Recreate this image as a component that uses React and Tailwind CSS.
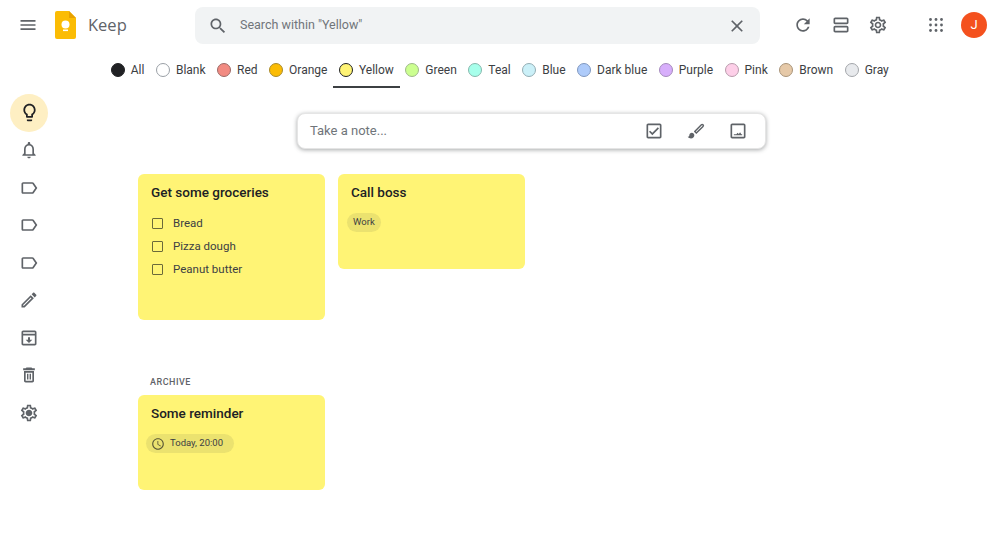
import React from "react";

const P = {
  menu: "M3 18h18v-2H3v2zm0-5h18v-2H3v2zm0-7v2h18V6H3z",
  search: "M15.5 14h-.79l-.28-.27C15.41 12.59 16 11.11 16 9.5 16 5.91 13.09 3 9.5 3S3 5.91 3 9.5 5.91 16 9.5 16c1.61 0 3.09-.59 4.23-1.57l.27.28v.79l5 4.99L20.49 19l-4.99-5zm-6 0C7.01 14 5 11.99 5 9.5S7.01 5 9.5 5 14 7.01 14 9.5 11.99 14 9.5 14z",
  close: "M19 6.41L17.59 5 12 10.59 6.41 5 5 6.41 10.59 12 5 17.59 6.41 19 12 13.41 17.59 19 19 17.59 13.41 12z",
  refresh: "M17.65 6.35C16.2 4.9 14.21 4 12 4c-4.42 0-7.99 3.58-7.99 8s3.57 8 7.99 8c3.73 0 6.84-2.55 7.73-6h-2.08c-.82 2.33-3.04 4-5.65 4-3.31 0-6-2.69-6-6s2.69-6 6-6c1.66 0 3.14.69 4.22 1.78L13 11h7V4l-2.35 2.35z",
  agenda: "M19 3H5c-1.1 0-2 .9-2 2v4c0 1.1.9 2 2 2h14c1.1 0 2-.9 2-2V5c0-1.1-.9-2-2-2zm0 6H5V5h14v4zM19 13H5c-1.1 0-2 .9-2 2v4c0 1.1.9 2 2 2h14c1.1 0 2-.9 2-2v-4c0-1.1-.9-2-2-2zm0 6H5v-4h14v4z",
  settings: "M19.43 12.98c.04-.32.07-.64.07-.98 0-.34-.03-.66-.07-.98l2.11-1.65c.19-.15.24-.42.12-.64l-2-3.46c-.09-.16-.26-.25-.44-.25-.06 0-.12.01-.17.03l-2.49 1c-.52-.4-1.08-.73-1.69-.98l-.38-2.65C14.46 2.18 14.25 2 14 2h-4c-.25 0-.46.18-.49.42l-.38 2.65c-.61.25-1.17.59-1.69.98l-2.49-1c-.06-.02-.12-.03-.18-.03-.17 0-.34.09-.43.25l-2 3.46c-.13.22-.07.49.12.64l2.11 1.65c-.04.32-.07.65-.07.98 0 .33.03.66.07.98l-2.11 1.65c-.19.15-.24.42-.12.64l2 3.46c.09.16.26.25.44.25.06 0 .12-.01.17-.03l2.49-1c.52.4 1.08.73 1.69.98l.38 2.65c.03.24.24.42.49.42h4c.25 0 .46-.18.49-.42l.38-2.65c.61-.25 1.17-.59 1.69-.98l2.49 1c.06.02.12.03.18.03.17 0 .34-.09.43-.25l2-3.46c.12-.22.07-.49-.12-.64l-2.11-1.65zm-1.98-1.71c.04.31.05.52.05.73 0 .21-.02.43-.05.73l-.14 1.13.89.7 1.08.84-.7 1.21-1.27-.51-1.04-.42-.9.68c-.43.32-.84.56-1.25.73l-1.06.43-.16 1.13-.2 1.35h-1.4l-.19-1.35-.16-1.13-1.06-.43c-.43-.18-.83-.41-1.23-.71l-.91-.7-1.06.43-1.27.51-.7-1.21 1.08-.84.89-.7-.14-1.13c-.03-.31-.05-.54-.05-.74s.02-.43.05-.73l.14-1.13-.89-.7-1.08-.84.7-1.21 1.27.51 1.04.42.9-.68c.43-.32.84-.56 1.25-.73l1.06-.43.16-1.13.2-1.35h1.39l.19 1.35.16 1.13 1.06.43c.43.18.83.41 1.23.71l.91.7 1.06-.43 1.27-.51.7 1.21-1.07.85-.89.7.14 1.13zM12 8c-2.21 0-4 1.79-4 4s1.79 4 4 4 4-1.79 4-4-1.79-4-4-4z",
  ring: "M12 14c-1.1 0-2-.9-2-2s.9-2 2-2 2 .9 2 2-.9 2-2 2z",
  bulb: "M9 21c0 .55.45 1 1 1h4c.55 0 1-.45 1-1v-1H9v1zm3-19C8.14 2 5 5.14 5 9c0 2.38 1.19 4.47 3 5.74V17c0 .55.45 1 1 1h6c.55 0 1-.45 1-1v-2.26c1.81-1.27 3-3.36 3-5.74 0-3.86-3.14-7-7-7zm2.85 11.1l-.85.6V16h-4v-2.3l-.85-.6C7.8 12.16 7 10.63 7 9c0-2.76 2.24-5 5-5s5 2.24 5 5c0 1.63-.8 3.16-2.15 4.1z",
  bell: "M12 22c1.1 0 2-.9 2-2h-4c0 1.1.9 2 2 2zm6-6v-5c0-3.07-1.63-5.64-4.5-6.32V4c0-.83-.67-1.5-1.5-1.5s-1.5.67-1.5 1.5v.68C7.64 5.36 6 7.92 6 11v5l-2 2v1h16v-1l-2-2zm-2 1H8v-6c0-2.48 1.51-4.5 4-4.5s4 2.02 4 4.5v6z",
  label: "M17.63 5.84C17.27 5.33 16.67 5 16 5L5 5.01C3.9 5.01 3 5.9 3 7v10c0 1.1.9 1.99 2 1.99L16 19c.67 0 1.27-.33 1.63-.84L22 12l-4.37-6.16zM16 17H5V7h11l3.55 5L16 17z",
  edit: "M3 17.25V21h3.75L17.81 9.94l-3.75-3.75L3 17.25zM5.92 19H5v-.92l9.06-9.06.92.92L5.92 19zM20.71 5.63l-2.34-2.34c-.2-.2-.45-.29-.71-.29s-.51.1-.7.29l-1.83 1.83 3.75 3.75 1.83-1.83c.39-.39.39-1.02 0-1.41z",
  archive: "M19 3H5c-1.1 0-2 .9-2 2v14c0 1.1.9 2 2 2h14c1.1 0 2-.9 2-2V5c0-1.1-.9-2-2-2zM5 5h14v2H5V5zm0 14V9h14v10H5zm8.2-8h-2.4v3H8l4 4 4-4h-2.8v-3z",
  trash: "M15 3H9L8 4H5v2.2h14V4h-3l-1-1zM6 7.2V19c0 1.1.9 2 2 2h8c1.1 0 2-.9 2-2V7.2H6zM16 19H8V9.2h8V19zM9.6 10.5h1.7v7H9.6zm3.1 0h1.7v7h-1.7z",
  check: "M19 3H5c-1.11 0-2 .9-2 2v14c0 1.1.89 2 2 2h14c1.11 0 2-.9 2-2V5c0-1.1-.89-2-2-2zm0 16H5V5h14v14zM17.99 9l-1.41-1.42-6.59 6.59-2.58-2.57-1.42 1.41 4 3.99z",
  brushTip: "M7 14c-1.66 0-3 1.34-3 3 0 1.31-1.16 2-2 2 .92 1.22 2.49 2 4 2 2.21 0 4-1.79 4-4 0-1.66-1.34-3-3-3z",
  image: "M19 5v14H5V5h14m0-2H5c-1.1 0-2 .9-2 2v14c0 1.1.9 2 2 2h14c1.1 0 2-.9 2-2V5c0-1.1-.9-2-2-2zM14.5 13.5l-1.5 2-1.5-1.5L10 16H7v1h10v-1h-1z",
  clock: "M11.99 2C6.47 2 2 6.48 2 12s4.47 10 9.99 10C17.52 22 22 17.52 22 12S17.52 2 11.99 2zM12 20c-4.42 0-8-3.58-8-8s3.58-8 8-8 8 3.58 8 8-3.58 8-8 8zm.5-13H11v6l5.25 3.15.75-1.23-4.5-2.67z",
};

const Icon = ({ d, className = "w-5 h-5 text-[#5f6368]" }) => (
  <svg viewBox="0 0 24 24" fill="currentColor" className={className}>
    <path d={d} />
  </svg>
);

const filters = [
  ["All", "bg-[#202124] border-[#202124]"],
  ["Blank", "bg-white border-[#9aa0a6]"],
  ["Red", "bg-[#f28b82] border-[#9d6a66]"],
  ["Orange", "bg-[#fbbc04] border-[#a98a2c]"],
  ["Yellow", "bg-[#fff475] border-[#202124]"],
  ["Green", "bg-[#ccff90] border-[#9fb98a]"],
  ["Teal", "bg-[#a7ffeb] border-[#86b8ad]"],
  ["Blue", "bg-[#cbf0f8] border-[#93adb4]"],
  ["Dark blue", "bg-[#aecbfa] border-[#8098c0]"],
  ["Purple", "bg-[#d7aefb] border-[#a58bbc]"],
  ["Pink", "bg-[#fdcfe8] border-[#b99bac]"],
  ["Brown", "bg-[#e6c9a8] border-[#a99479]"],
  ["Gray", "bg-[#e8eaed] border-[#a3a6aa]"],
];

const side = [P.bell, P.label, P.label, P.label, P.edit, P.archive, P.trash, P.settings];

const Card = ({ title, className, children }) => (
  <div className={`w-[187px] rounded-[6px] bg-[#fff475] pt-[10px] ${className}`}>
    <div className="pl-[13px] text-[13.5px] leading-[16px] font-medium text-[#202124]">{title}</div>
    {children}
  </div>
);

export default function App() {
  return (
    <div className="w-[1000px] h-[560px] overflow-hidden bg-white text-[#3c4043]" style={{ fontFamily: "Roboto, sans-serif" }}>
      <header className="h-[50px] flex items-center">
        <button className="ml-[18px] w-5 h-5"><Icon d={P.menu} /></button>
        <svg viewBox="0 0 21 28" className="ml-[17px] w-[21px] h-[28px] -mt-[1px]">
          <path d="M2 0h12l7 7v19a2 2 0 0 1-2 2H2a2 2 0 0 1-2-2V2a2 2 0 0 1 2-2z" fill="#fbbc04" />
          <path d="M14 0l7 7h-7z" fill="#e8a200" />
          <circle cx="10.5" cy="13.5" r="4" fill="#fff" />
          <rect x="8" y="18.5" width="5" height="1.6" fill="#fff" />
        </svg>
        <span className="ml-3 w-[107px] text-[16.5px] leading-6 text-[#5f6368]" style={{ fontFamily: "'Open Sans', sans-serif" }}>Keep</span>
        <div className="w-[565px] h-[37px] mt-[1px] rounded-lg bg-[#f1f3f4] flex items-center px-[13px]">
          <Icon d={P.search} />
          <span className="ml-[12px] flex-1 text-[12.5px] text-[#70757a]">Search within "Yellow"</span>
          <Icon d={P.close} />
        </div>
        <button className="ml-[33px]"><Icon d={P.refresh} /></button>
        <button className="ml-[18px]"><Icon d={P.agenda} /></button>
        <button className="ml-[17px]"><Icon d={P.settings + P.ring} /></button>
        <button className="ml-[41px]">
          <svg viewBox="0 0 14 14" className="w-[14px] h-[14px] text-[#5f6368]" fill="currentColor">
            {[1.5, 7, 12.5].flatMap((y) => [1.5, 7, 12.5].map((x) => <circle key={`${x}-${y}`} cx={x} cy={y} r="1.4" />))}
          </svg>
        </button>
        <div className="ml-[18px] w-[26px] h-[26px] rounded-full bg-[#f4511e] text-white text-[13px] flex items-center justify-center">J</div>
      </header>

      <nav className="h-[38px] flex items-start pl-[105px] text-[12px] text-[#3c4043]">
        {filters.map(([name, cls]) => (
          <div key={name} className={`h-[38px] px-[5.75px] flex items-start pt-[12px] ${name === "Yellow" ? "border-b-2 border-[#3c4043]" : ""}`}>
            <span className={`w-[14px] h-[14px] mt-[0.5px] rounded-full border ${cls}`} />
            <span className="ml-[6px] leading-[14px] mt-[0.5px]">{name}</span>
          </div>
        ))}
      </nav>

      <div className="flex">
        <aside className="w-[138px] pl-[10px] pt-[6px] flex flex-col">
          <div className="w-[38px] h-[37.5px] rounded-full bg-[#feefc3] flex items-center justify-center">
            <Icon d={P.bulb} className="w-[21px] h-[21px] text-[#202124]" />
          </div>
          {side.map((d, i) => (
            <div key={i} className="w-[38px] h-[37.5px] flex items-center justify-center">
              <Icon d={d} className="w-[20px] h-[20px] text-[#5f6368]" />
            </div>
          ))}
        </aside>

        <main className="flex-1">
          <div className="ml-[159px] mt-[25px] w-[469px] h-[36px] rounded-lg border border-[#e5e5e5] bg-white shadow-[0_1px_4px_rgba(60,64,67,0.45)] flex items-center pl-3 pr-[17px]">
            <span className="flex-1 text-[13px] text-[#70757a]">Take a note...</span>
            <Icon d={P.check} className="w-[20px] h-[20px] text-[#5f6368]" />
            <svg viewBox="0 0 24 24" className="ml-[22px] w-[20px] h-[20px] text-[#5f6368]">
              <path d={P.brushTip} fill="currentColor" />
              <path d="M10.5 12.6l8-8a1.3 1.3 0 0 1 1.9 1.9l-8 8z" fill="none" stroke="currentColor" strokeWidth="1.8" strokeLinejoin="round" />
            </svg>
            <span className="ml-[22px]"><Icon d={P.image} className="w-[20px] h-[20px] text-[#5f6368]" /></span>
          </div>

          <div className="mt-[25px] flex items-start gap-[13px]">
            <Card title="Get some groceries" className="h-[146px]">
              <ul className="mt-[15px] pl-[14px] flex flex-col gap-[5px] text-[11.5px] text-[#3c4043]">
                {["Bread", "Pizza dough", "Peanut butter"].map((t) => (
                  <li key={t} className="h-[18px] flex items-center">
                    <span className="w-[11px] h-[11px] border border-[#6b6a3a] rounded-[1px] -mt-[2px]" />
                    <span className="ml-[10px]">{t}</span>
                  </li>
                ))}
              </ul>
            </Card>
            <Card title="Call boss" className="h-[95px]">
              <span className="ml-[9px] mt-[13px] inline-flex h-[19px] items-center rounded-full bg-[#ebe26f] px-[6px] text-[9.5px] text-[#3c4043]">Work</span>
            </Card>
          </div>

          <div className="mt-[55px] pl-[12px] pt-[1px] h-[20px] text-[9px] leading-[12px] font-medium tracking-[0.5px] text-[#5f6368]">ARCHIVE</div>
          <Card title="Some reminder" className="h-[95px]">
            <span className="ml-[8px] mt-[13px] inline-flex h-[19px] items-center rounded-full bg-[#ebe26f] pl-[5px] pr-[11px] text-[9.5px] text-[#3c4043]">
              <Icon d={P.clock} className="w-[14px] h-[14px] text-[#5a5836]" />
              <span className="ml-[5px]">Today, 20:00</span>
            </span>
          </Card>
        </main>
      </div>
    </div>
  );
}
